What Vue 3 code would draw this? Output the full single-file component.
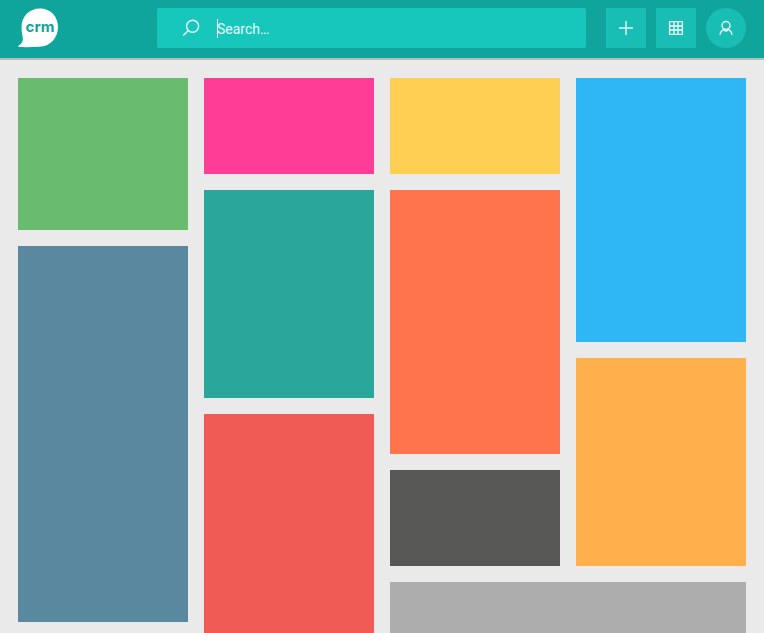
<script setup>
const tiles = [
  { name: 'green', column: '1', row: '1 / span 3', color: '#69bb70' },
  { name: 'slate', column: '1', row: '4 / span 7', color: '#5a889f' },
  { name: 'pink', column: '2', row: '1 / span 2', color: '#ff3c96' },
  { name: 'teal', column: '2', row: '3 / span 4', color: '#2ba69b' },
  { name: 'red', column: '2', row: '7 / span 5', color: '#f05b55' },
  { name: 'yellow', column: '3', row: '1 / span 2', color: '#ffcf53' },
  { name: 'coral', column: '3', row: '3 / span 5', color: '#ff744d' },
  { name: 'charcoal', column: '3', row: '8 / span 2', color: '#575755' },
  { name: 'blue', column: '4', row: '1 / span 5', color: '#2fb7f5' },
  { name: 'orange', column: '4', row: '6 / span 4', color: '#ffb04d' },
  { name: 'gray', column: '3 / span 2', row: '10 / span 2', color: '#adadad' }
]
</script>

<template>
  <div class="page">
    <header class="topbar">
      <svg class="logo" viewBox="0 0 42 40" aria-label="crm">
        <path d="M22 .5C32.5 .5 40 8.5 40 19C40 30 32 38.5 21.5 38.8C14.5 39.1 7 39.3 1 39C-.2 39 .1 38 1 37.3C4.5 35 5.5 32 4.5 28C3.8 25 3.5 22 3.5 19C3.5 8.5 11.5 .5 22 .5Z" fill="#fff" />
        <text x="7.6" y="23.9" textLength="28.8" lengthAdjust="spacingAndGlyphs">crm</text>
      </svg>
      <div class="search">
        <svg class="search-icon" width="18" height="18" viewBox="0 0 18 18">
          <circle cx="10.6" cy="7.2" r="6" />
          <path d="M6.4 11.4L1.2 16.6" />
        </svg>
        <span class="field">Search…</span>
      </div>
      <nav class="actions">
        <button class="action" aria-label="Add">
          <svg width="16" height="16" viewBox="0 0 16 16"><path class="plus" d="M8 1V15M1 8H15" /></svg>
        </button>
        <button class="action" aria-label="Apps">
          <svg width="16" height="16" viewBox="0 0 16 16">
            <path class="grid" d="M1.6 1.6H14.4V14.4H1.6ZM6 1.6V14.4M10 1.6V14.4M1.6 6H14.4M1.6 10H14.4" />
          </svg>
        </button>
        <button class="action round" aria-label="Profile">
          <svg width="16" height="16" viewBox="0 0 16 16">
            <circle cx="8" cy="5.5" r="4" />
            <path d="M2.1 14.8C2.1 12 3.8 10.4 5.8 9.3C6.5 11.7 9.5 11.7 10.2 9.3C12.2 10.4 13.9 12 13.9 14.8" />
          </svg>
        </button>
      </nav>
    </header>
    <main class="tiles">
      <div
        v-for="tile in tiles"
        :key="tile.name"
        :style="{ gridColumn: tile.column, gridRow: tile.row, background: tile.color }"
      ></div>
    </main>
  </div>
</template>

<style>
body {
  margin: 0;
  background: #eaeaea;
}
</style>

<style scoped>
.page {
  height: 633px;
  overflow: hidden;
  background: #eaeaea;
  font-family: Roboto, sans-serif;
}
.topbar {
  box-sizing: border-box;
  height: 60px;
  padding: 8px 18px 10px;
  display: flex;
  background: #10a59c;
  border-bottom: 2px solid #bcbcbc;
}
.logo {
  width: 42px;
  height: 40px;
  margin-right: 97px;
  flex: none;
}
.logo text {
  font: 700 14.5px Inter, sans-serif;
  fill: #10a59c;
}
.search {
  box-sizing: border-box;
  width: 429px;
  height: 40px;
  padding-left: 25px;
  display: flex;
  align-items: center;
  border-radius: 2px;
  background: #18c7bc;
}
.search-icon {
  margin: 0 17px 0 0;
  fill: none;
  stroke: #e8fbf9;
  stroke-width: 1.4;
}
.field {
  height: 19px;
  margin-top: 1px;
  border-left: 1px solid #fff;
  color: #e6faf8;
  font-size: 14px;
  line-height: 21px;
  text-indent: -1px;
}
.actions {
  display: flex;
  gap: 10px;
  margin-left: 20px;
}
.action {
  width: 40px;
  height: 40px;
  padding: 0;
  display: flex;
  align-items: center;
  justify-content: center;
  border: 0;
  background: #18beb4;
}
.action svg {
  fill: none;
  stroke: #effcfa;
  stroke-width: 1.35;
}
.action .plus {
  stroke: #e0f7f5;
  stroke-width: 1.4;
}
.action .grid {
  stroke-width: 1.3;
}
.round {
  border-radius: 50%;
}
.tiles {
  display: grid;
  grid-template-columns: repeat(4, 170px);
  grid-auto-rows: 40px;
  gap: 16px;
  padding: 18px;
}
</style>
